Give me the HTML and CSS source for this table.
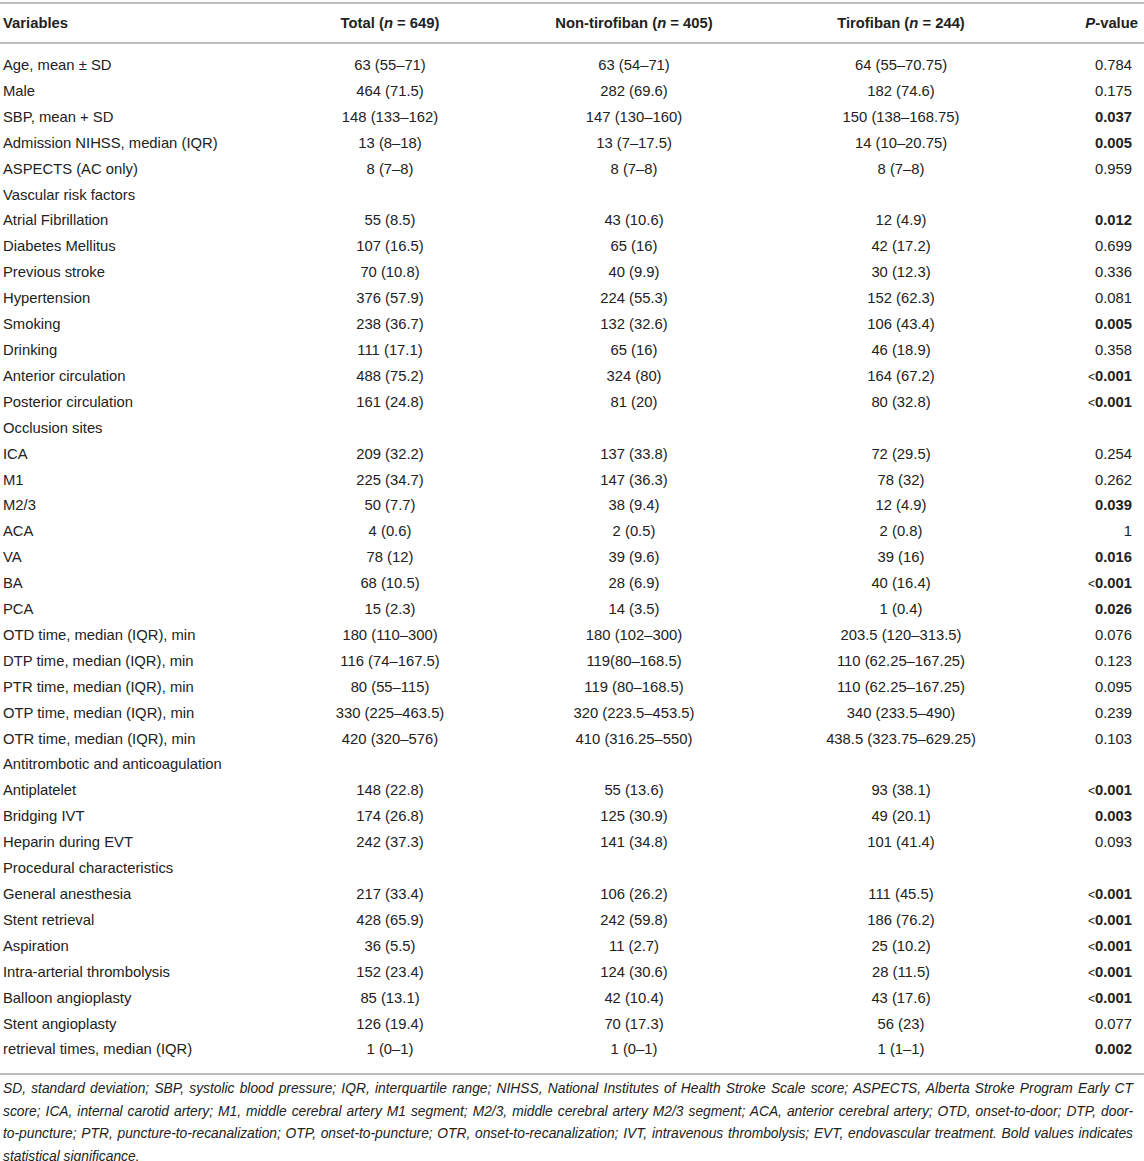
FILE: index.html
```html
<!DOCTYPE html>
<html lang="en">

<head>
  <meta charset="UTF-8">
  <title>Baseline characteristics</title>
  <link rel="stylesheet" href="styles.css">
</head>

<body>
  <table class="data">
    <colgroup>
      <col class="colVar">
      <col class="colTotal">
      <col class="colNon">
      <col class="colTiro">
      <col class="colP">
    </colgroup>
    <thead>
      <tr>
        <th class="left">Variables</th>
        <th>Total (<i>n</i> = 649)</th>
        <th>Non-tirofiban (<i>n</i> = 405)</th>
        <th>Tirofiban (<i>n</i> = 244)</th>
        <th class="right"><i>P</i>-value</th>
      </tr>
    </thead>
    <tbody>
      <tr><td>Age, mean ± SD</td><td>63 (55–71)</td><td>63 (54–71)</td><td>64 (55–70.75)</td><td>0.784</td></tr>
      <tr><td>Male</td><td>464 (71.5)</td><td>282 (69.6)</td><td>182 (74.6)</td><td>0.175</td></tr>
      <tr><td>SBP, mean + SD</td><td>148 (133–162)</td><td>147 (130–160)</td><td>150 (138–168.75)</td><td><b>0.037</b></td></tr>
      <tr><td>Admission NIHSS, median (IQR)</td><td>13 (8–18)</td><td>13 (7–17.5)</td><td>14 (10–20.75)</td><td><b>0.005</b></td></tr>
      <tr><td>ASPECTS (AC only)</td><td>8 (7–8)</td><td>8 (7–8)</td><td>8 (7–8)</td><td>0.959</td></tr>
      <tr><td>Vascular risk factors</td><td></td><td></td><td></td><td></td></tr>
      <tr><td>Atrial Fibrillation</td><td>55 (8.5)</td><td>43 (10.6)</td><td>12 (4.9)</td><td><b>0.012</b></td></tr>
      <tr><td>Diabetes Mellitus</td><td>107 (16.5)</td><td>65 (16)</td><td>42 (17.2)</td><td>0.699</td></tr>
      <tr><td>Previous stroke</td><td>70 (10.8)</td><td>40 (9.9)</td><td>30 (12.3)</td><td>0.336</td></tr>
      <tr><td>Hypertension</td><td>376 (57.9)</td><td>224 (55.3)</td><td>152 (62.3)</td><td>0.081</td></tr>
      <tr><td>Smoking</td><td>238 (36.7)</td><td>132 (32.6)</td><td>106 (43.4)</td><td><b>0.005</b></td></tr>
      <tr><td>Drinking</td><td>111 (17.1)</td><td>65 (16)</td><td>46 (18.9)</td><td>0.358</td></tr>
      <tr><td>Anterior circulation</td><td>488 (75.2)</td><td>324 (80)</td><td>164 (67.2)</td><td><b><span class="lt">&lt;</span>0.001</b></td></tr>
      <tr><td>Posterior circulation</td><td>161 (24.8)</td><td>81 (20)</td><td>80 (32.8)</td><td><b><span class="lt">&lt;</span>0.001</b></td></tr>
      <tr><td>Occlusion sites</td><td></td><td></td><td></td><td></td></tr>
      <tr><td>ICA</td><td>209 (32.2)</td><td>137 (33.8)</td><td>72 (29.5)</td><td>0.254</td></tr>
      <tr><td>M1</td><td>225 (34.7)</td><td>147 (36.3)</td><td>78 (32)</td><td>0.262</td></tr>
      <tr><td>M2/3</td><td>50 (7.7)</td><td>38 (9.4)</td><td>12 (4.9)</td><td><b>0.039</b></td></tr>
      <tr><td>ACA</td><td>4 (0.6)</td><td>2 (0.5)</td><td>2 (0.8)</td><td>1</td></tr>
      <tr><td>VA</td><td>78 (12)</td><td>39 (9.6)</td><td>39 (16)</td><td><b>0.016</b></td></tr>
      <tr><td>BA</td><td>68 (10.5)</td><td>28 (6.9)</td><td>40 (16.4)</td><td><b><span class="lt">&lt;</span>0.001</b></td></tr>
      <tr><td>PCA</td><td>15 (2.3)</td><td>14 (3.5)</td><td>1 (0.4)</td><td><b>0.026</b></td></tr>
      <tr><td>OTD time, median (IQR), min</td><td>180 (110–300)</td><td>180 (102–300)</td><td>203.5 (120–313.5)</td><td>0.076</td></tr>
      <tr><td>DTP time, median (IQR), min</td><td>116 (74–167.5)</td><td>119(80–168.5)</td><td>110 (62.25–167.25)</td><td>0.123</td></tr>
      <tr><td>PTR time, median (IQR), min</td><td>80 (55–115)</td><td>119 (80–168.5)</td><td>110 (62.25–167.25)</td><td>0.095</td></tr>
      <tr><td>OTP time, median (IQR), min</td><td>330 (225–463.5)</td><td>320 (223.5–453.5)</td><td>340 (233.5–490)</td><td>0.239</td></tr>
      <tr><td>OTR time, median (IQR), min</td><td>420 (320–576)</td><td>410 (316.25–550)</td><td>438.5 (323.75–629.25)</td><td>0.103</td></tr>
      <tr><td>Antitrombotic and anticoagulation</td><td></td><td></td><td></td><td></td></tr>
      <tr><td>Antiplatelet</td><td>148 (22.8)</td><td>55 (13.6)</td><td>93 (38.1)</td><td><b><span class="lt">&lt;</span>0.001</b></td></tr>
      <tr><td>Bridging IVT</td><td>174 (26.8)</td><td>125 (30.9)</td><td>49 (20.1)</td><td><b>0.003</b></td></tr>
      <tr><td>Heparin during EVT</td><td>242 (37.3)</td><td>141 (34.8)</td><td>101 (41.4)</td><td>0.093</td></tr>
      <tr><td>Procedural characteristics</td><td></td><td></td><td></td><td></td></tr>
      <tr><td>General anesthesia</td><td>217 (33.4)</td><td>106 (26.2)</td><td>111 (45.5)</td><td><b><span class="lt">&lt;</span>0.001</b></td></tr>
      <tr><td>Stent retrieval</td><td>428 (65.9)</td><td>242 (59.8)</td><td>186 (76.2)</td><td><b><span class="lt">&lt;</span>0.001</b></td></tr>
      <tr><td>Aspiration</td><td>36 (5.5)</td><td>11 (2.7)</td><td>25 (10.2)</td><td><b><span class="lt">&lt;</span>0.001</b></td></tr>
      <tr><td>Intra-arterial thrombolysis</td><td>152 (23.4)</td><td>124 (30.6)</td><td>28 (11.5)</td><td><b><span class="lt">&lt;</span>0.001</b></td></tr>
      <tr><td>Balloon angioplasty</td><td>85 (13.1)</td><td>42 (10.4)</td><td>43 (17.6)</td><td><b><span class="lt">&lt;</span>0.001</b></td></tr>
      <tr><td>Stent angioplasty</td><td>126 (19.4)</td><td>70 (17.3)</td><td>56 (23)</td><td>0.077</td></tr>
      <tr><td>retrieval times, median (IQR)</td><td>1 (0–1)</td><td>1 (0–1)</td><td>1 (1–1)</td><td><b>0.002</b></td></tr>
    </tbody>
  </table>

  <p class="footnote">SD, standard deviation; SBP, systolic blood pressure; IQR, interquartile range; NIHSS, National Institutes of Health Stroke Scale score; ASPECTS, Alberta Stroke Program Early CT score; ICA, internal carotid artery; M1, middle cerebral artery M1 segment; M2/3, middle cerebral artery M2/3 segment; ACA, anterior cerebral artery; OTD, onset-to-door; DTP, door-<span class="keep">to-puncture;</span> PTR, puncture-to-recanalization; OTP, onset-to-puncture; OTR, onset-to-recanalization; IVT, intravenous thrombolysis; EVT, endovascular treatment. Bold values indicates statistical significance.</p>
</body>

</html>
```

FILE: styles.css
```css
body {
  margin: 0;
  padding-top: 2px;
  font-family: "Liberation Sans", Arial, sans-serif;
  color: #222;
  background: #fff;
}

.data {
  width: 1144px;
  border-collapse: collapse;
  table-layout: fixed;
  font-size: 14.8px;
}

.colVar {
  width: 270px;
}

.colTotal {
  width: 240px;
}

.colNon {
  width: 248px;
}

.colTiro {
  width: 286px;
}

.colP {
  width: 100px;
}

.data thead tr {
  border-top: 2px solid #bdbdbd;
  border-bottom: 2px solid #bdbdbd;
}

.data th {
  height: 38px;
  padding: 0;
  font-weight: bold;
  text-align: center;
  white-space: nowrap;
}

.data th.left {
  text-align: left;
  padding-left: 3px;
}

.data th.right {
  text-align: right;
  padding-right: 6px;
}

.data td {
  height: 25.9px;
  padding: 0;
  line-height: 25.9px;
  text-align: center;
  white-space: nowrap;
}

.data td:first-child {
  text-align: left;
  padding-left: 3px;
}

.data td:last-child {
  text-align: right;
  padding-right: 12px;
}

.data tbody tr:first-child td {
  padding-top: 9px;
}

.data tbody tr:last-child {
  border-bottom: 2px solid #bdbdbd;
}

.data tbody tr:last-child td {
  padding-bottom: 10px;
}

.lt {
  font-weight: normal;
  font-size: 12px;
  line-height: 1;
}

.footnote {
  margin: 3px 0 0;
  padding: 0 11px 0 3px;
  font-size: 13.8px;
  font-style: italic;
  line-height: 22.4px;
  text-align: justify;
}

.keep {
  white-space: nowrap;
}
```
